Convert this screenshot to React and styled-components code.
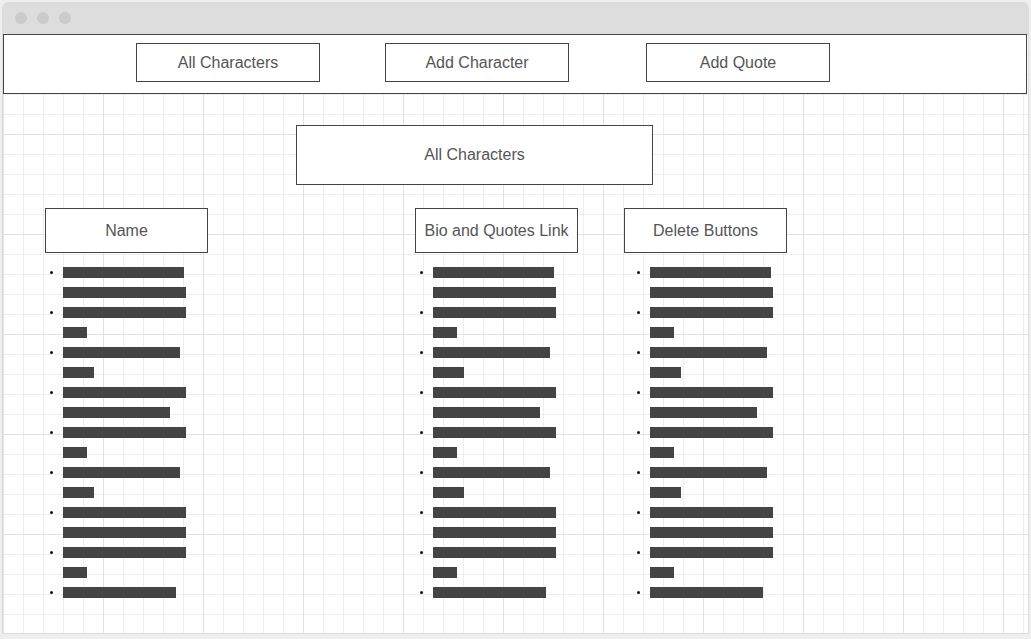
import React from "react";
import styled, { createGlobalStyle } from "styled-components";

const items = [
  [121, 123],
  [123, 24],
  [117, 31],
  [123, 107],
  [123, 24],
  [117, 31],
  [123, 123],
  [123, 24],
  [113],
];

const columns = [
  { title: "Name", offset: 42, indent: 5 },
  { title: "Bio and Quotes Link", offset: 207, indent: 5 },
  { title: "Delete Buttons", offset: 46, indent: 13 },
];

const navLinks = [
  { label: "All Characters", offset: 132 },
  { label: "Add Character", offset: 65 },
  { label: "Add Quote", offset: 77 },
];

const App = () => {
  return (
    <>
      <GlobalStyle />
      <Window>
        <TitleBar>
          <Dot />
          <Dot />
          <Dot />
        </TitleBar>
        <Canvas>
          <Nav>
            {navLinks.map((link) => (
              <NavButton key={link.label} $offset={link.offset}>
                {link.label}
              </NavButton>
            ))}
          </Nav>
          <PageTitle>All Characters</PageTitle>
          <Columns>
            {columns.map((col) => (
              <Column key={col.title} $offset={col.offset}>
                <ColumnHeader>{col.title}</ColumnHeader>
                <List $indent={col.indent}>
                  {items.map((lines, i) => (
                    <Item key={i}>
                      <Marker />
                      <Lines>
                        {lines.map((w, j) => (
                          <Line key={j}>
                            <Bar style={{ width: w }} />
                          </Line>
                        ))}
                      </Lines>
                    </Item>
                  ))}
                </List>
              </Column>
            ))}
          </Columns>
        </Canvas>
      </Window>
    </>
  );
};

export default App;

const GlobalStyle = createGlobalStyle`
  html, body {
    margin: 0;
    padding: 0;
    background: #efefef;
    font-family: "Liberation Sans", Arial, sans-serif;
  }
  * {
    box-sizing: border-box;
  }
`;

const Window = styled.div`
  width: 1027px;
  height: 632px;
  margin: 2px 2px 0 2px;
  border: 1px solid #dcdcdc;
  border-top: none;
  border-radius: 6px 6px 0 0;
  overflow: hidden;
  display: flex;
  flex-direction: column;
  background: #fff;
`;

const TitleBar = styled.div`
  height: 32px;
  flex-shrink: 0;
  background: #dddddd;
  display: flex;
  align-items: center;
  gap: 10px;
  padding-left: 12px;
`;

const Dot = styled.span`
  width: 12px;
  height: 12px;
  border-radius: 50%;
  background: #cbcbcb;
`;

const Canvas = styled.div`
  flex: 1;
  background-color: #fff;
  background-image:
    linear-gradient(to right, #e2e2e2 1px, transparent 1px),
    linear-gradient(to bottom, #e2e2e2 1px, transparent 1px),
    linear-gradient(to right, #eeeeee 1px, transparent 1px),
    linear-gradient(to bottom, #eeeeee 1px, transparent 1px);
  background-size: 100px 100px, 100px 100px, 20px 20px, 20px 20px;
`;

const Nav = styled.div`
  height: 60px;
  margin-right: 1px;
  background: #fff;
  border: 1px solid #444;
  display: flex;
  align-items: flex-start;
  padding-top: 8px;
`;

const Box = styled.div`
  background: #fff;
  border: 1px solid #444;
  color: #555;
  font-size: 16px;
  display: flex;
  align-items: center;
  justify-content: center;
  white-space: nowrap;
`;

const NavButton = styled(Box)`
  width: 184px;
  height: 39px;
  margin-left: ${(p) => p.$offset}px;
`;

const PageTitle = styled(Box)`
  width: 357px;
  height: 60px;
  margin: 31px 0 0 293px;
`;

const Columns = styled.div`
  display: flex;
  align-items: flex-start;
  margin-top: 23px;
`;

const Column = styled.div`
  width: 163px;
  margin-left: ${(p) => p.$offset}px;
`;

const ColumnHeader = styled(Box)`
  height: 45px;
`;

const List = styled.ul`
  list-style: none;
  margin: 9px 0 0;
  padding: 0 0 0 ${(p) => p.$indent}px;
`;

const Item = styled.li`
  display: grid;
  grid-template-columns: 13px auto;
`;

const Marker = styled.span`
  width: 3px;
  height: 3px;
  margin-top: 9px;
  background: #111;
  border-radius: 50%;
`;

const Lines = styled.div`
  display: flex;
  flex-direction: column;
`;

const Line = styled.div`
  height: 20px;
  display: flex;
  align-items: center;
`;

const Bar = styled.span`
  display: block;
  height: 11px;
  background: #444;
`;
